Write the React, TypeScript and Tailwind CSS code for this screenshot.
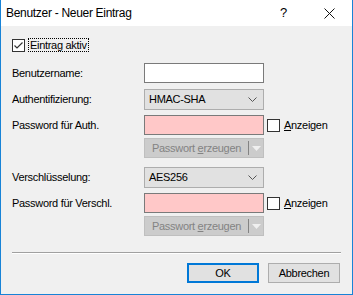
import React from "react"

const font = { fontFamily: '"Liberation Sans", Arial, sans-serif', letterSpacing: "-0.3px" }

function CheckBox({ checked }: { checked?: boolean }) {
  return (
    <div className="flex h-[13px] w-[13px] shrink-0 items-center justify-center border border-[#333333] bg-white">
      {checked && (
        <svg width="11" height="11" viewBox="0 0 11 11">
          <path d="M1.5 5.5 L4 8 L9.5 2.5" fill="none" stroke="#333333" strokeWidth="1.2" />
        </svg>
      )}
    </div>
  )
}

function Label({ children }: { children: React.ReactNode }) {
  return <div className="w-[132px] shrink-0 whitespace-nowrap text-[11px] leading-none text-black">{children}</div>
}

function Select({ value }: { value: string }) {
  return (
    <div className="flex h-[21px] w-[120px] items-center justify-between border border-[#adadad] bg-[#e1e1e1] pl-[4px] pr-[6px] text-[11px] text-black">
      <span>{value}</span>
      <svg width="9" height="6" viewBox="0 0 9 6">
        <path d="M0.5 0.5 L4.5 4.5 L8.5 0.5" fill="none" stroke="#555555" strokeWidth="1" />
      </svg>
    </div>
  )
}

function Anzeigen() {
  return (
    <div className="ml-[3px] flex items-center gap-[4px]">
      <CheckBox />
      <span className="whitespace-nowrap text-[11px] text-black">
        <span className="underline">A</span>nzeigen
      </span>
    </div>
  )
}

function PasswordRow({ label }: { label: string }) {
  return (
    <div className="flex h-[20px] items-center">
      <Label>{label}</Label>
      <div className="h-[20px] w-[120px] border border-[#7a7a7a] bg-[#ffc8c8]" />
      <Anzeigen />
    </div>
  )
}

function GenerateButton() {
  return (
    <div className="ml-[132px] flex h-[20px] w-[120px] items-center border border-[#bfbfbf] bg-[#cccccc] text-[11px] text-[#838383]">
      <span className="flex-1 whitespace-nowrap pl-[7px]">
        Passwort <span className="underline">e</span>rzeugen
      </span>
      <div className="h-[14px] w-px bg-[#838383]" />
      <div className="flex w-[14px] items-center justify-center">
        <svg width="9" height="5" viewBox="0 0 9 5">
          <path d="M0 0 L9 0 L4.5 5 Z" fill="#f0f0f0" />
        </svg>
      </div>
    </div>
  )
}

export default function App() {
  return (
    <div style={font} className="flex h-[295px] w-[353px] flex-col border-x border-b border-[#1883d7] bg-[#f0f0f0]">
      <div className="flex h-[26px] shrink-0 items-center bg-white">
        <span className="whitespace-nowrap pl-[5px] text-[12px] text-black">Benutzer - Neuer Eintrag</span>
        <span className="ml-auto text-[13px] text-black">?</span>
        <svg className="ml-[37px] mr-[17px]" width="11" height="11" viewBox="0 0 11 11">
          <path d="M0.5 0.5 L10.5 10.5 M10.5 0.5 L0.5 10.5" stroke="#111111" strokeWidth="1" />
        </svg>
      </div>

      <div className="flex flex-1 flex-col px-[11px]">
        <div className="mt-[12px] flex h-[14px] items-center gap-[3px]">
          <CheckBox checked />
          <span className="whitespace-nowrap border border-dotted border-black px-px text-[11px] leading-[12px] text-black">
            Eintrag aktiv
          </span>
        </div>

        <div className="mt-[11px] flex h-[20px] items-center">
          <Label>Benutzername:</Label>
          <div className="h-[20px] w-[120px] border border-[#7a7a7a] bg-white" />
        </div>

        <div className="mt-[6px] flex items-center">
          <Label>Authentifizierung:</Label>
          <Select value="HMAC-SHA" />
        </div>

        <div className="mt-[5px]">
          <PasswordRow label="Password für Auth." />
        </div>
        <div className="mt-[3px]">
          <GenerateButton />
        </div>

        <div className="mt-[9px] flex items-center">
          <Label>Verschlüsselung:</Label>
          <Select value="AES256" />
        </div>

        <div className="mt-[5px]">
          <PasswordRow label="Password für Verschl." />
        </div>
        <div className="mt-[3px]">
          <GenerateButton />
        </div>

        <div className="mt-[16px] h-[2px] border-t border-[#a0a0a0] border-b border-b-white" />

        <div className="mt-[9px] flex justify-end gap-[9px] pr-px">
          <button className="h-[20px] w-[72px] border-2 border-[#0078d7] bg-[#e1e1e1] text-[11px] text-black">
            OK
          </button>
          <button className="h-[20px] w-[72px] border border-[#adadad] bg-[#e1e1e1] text-[11px] text-black">
            Abbrechen
          </button>
        </div>
      </div>
    </div>
  )
}
